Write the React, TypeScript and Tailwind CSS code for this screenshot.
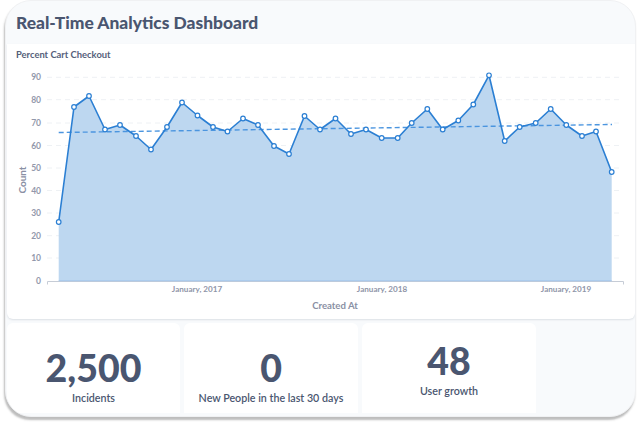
const pts: [number, number][] = [[58.7,222],[74,107],[89,96],[105,129.5],[120,125],[136,136],[151,149.5],[167,127],[182,102.5],[197.5,115.5],[213,127],[227.5,131.5],[243,118.5],[258,125],[274,146],[289,154],[304.5,116],[320,129.5],[335.5,118.5],[351,134],[366,129.5],[381.7,138],[397.7,138],[411.7,123],[427.3,109],[442.7,129.5],[458.3,120.5],[473.3,104.5],[489,75.3],[504.7,141],[519.7,127],[535.7,123],[550.7,109],[566.3,125],[582,136],[596,131.5],[611.7,172]];
const line = pts.map((p) => p.join(",")).join(" ");
const grid: [string, number][] = [["90",77.3],["80",99.7],["70",123],["60",145.5],["50",168],["40",190.5],["30",213],["20",235.7],["10",258],["0",280.5]];

function Stat({ value, label, lifted, narrow }: { value: string; label: string; lifted?: boolean; narrow?: boolean }) {
  return (
    <div className={`${narrow ? "w-[173px]" : "w-[174px]"} bg-white rounded-t-md rounded-b-none flex flex-col items-center text-[#4a5670] ${lifted ? "pt-[15px]" : "pt-[22px]"}`}>
      <div className="text-[37.5px] leading-[46px] font-black">{value}</div>
      <div className="text-[10.7px] leading-[14px] font-semibold mt-[0px]">{label}</div>
    </div>
  );
}

export default function App() {
  return (
    <div className="w-[640px] h-[426px] bg-white overflow-hidden pl-[5px] pr-[4px] pt-0 font-['Lato','Noto_Sans',sans-serif]">
      <div className="w-[631px] h-[417px] bg-[#f8fafc] rounded-[26px] border border-[#f0f1f3] overflow-hidden shadow-[-1px_3px_2px_rgba(90,90,90,0.4)] flex flex-col">
        <div className="h-[43px] shrink-0 pl-[10px] flex items-center">
          <h1 className="text-[17.4px] font-black text-[#4a5670] mt-[1px]">Real-Time Analytics Dashboard</h1>
        </div>
        <div className="h-[275px] shrink-0 ml-[1px] bg-white rounded-b-md shadow-[0_1px_2px_rgba(60,70,90,0.14)] relative">
          <div className="absolute left-[9px] top-[5px] text-[9.4px] leading-[12px] font-bold text-[#55607a]">Percent Cart Checkout</div>
          <svg className="absolute left-[-7px] top-[-44px] w-[640px] h-[426px] pointer-events-none" viewBox="0 0 640 426" fontFamily="Lato, sans-serif">
            {grid.map(([l, y]) => (
              <g key={l}>
                {l !== "0" && <line x1="47" x2="622" y1={y} y2={y} stroke="#eef1f4" strokeDasharray="5 4" />}
                <text x="41" y={y + 3} textAnchor="end" fontSize="8.5" fontWeight="700" fill="#9298ab">{l}</text>
              </g>
            ))}
            <path d={`M58.7,281 L${line.replace(/ /g, " L")} L611.7,281 Z`} fill="#bdd7f0" />
            <path d="M47.5,284.5 V281.5 H623.5 V284.5" fill="none" stroke="#c6ccd6" strokeWidth="1" />
            <line x1="58.7" x2="611.7" y1="280.8" y2="280.8" stroke="#a6c6ea" strokeWidth="1" />
            <line x1="58.7" y1="132.5" x2="612" y2="124.5" stroke="#4b95df" strokeWidth="1.4" strokeDasharray="5 3" />
            <polyline points={line} fill="none" stroke="#2b7fd3" strokeWidth="1.6" strokeLinejoin="round" />
            {pts.map(([x, y]) => (
              <circle key={x} cx={x} cy={y} r="2.3" fill="#fff" stroke="#2b7fd3" strokeWidth="1.2" />
            ))}
            <text x="197" y="292" textAnchor="middle" fontSize="8.1" fontWeight="700" fill="#8f95a8">January, 2017</text>
            <text x="382" y="292" textAnchor="middle" fontSize="8.1" fontWeight="700" fill="#8f95a8">January, 2018</text>
            <text x="566" y="292" textAnchor="middle" fontSize="8.1" fontWeight="700" fill="#8f95a8">January, 2019</text>
            <text x="335" y="309" textAnchor="middle" fontSize="9.6" fontWeight="700" fill="#8a90a4">Created At</text>
            <text transform="translate(26 180) rotate(-90)" textAnchor="middle" fontSize="10" fontWeight="700" fill="#8a90a4">Count</text>
          </svg>
        </div>
        <div className="flex gap-[4px] ml-[1px] mt-[4px] h-[90px] shrink-0">
          <Stat value="2,500" label="Incidents" narrow />
          <Stat value="0" label="New People in the last 30 days" />
          <Stat value="48" label="User growth" lifted />
        </div>
      </div>
    </div>
  );
}
